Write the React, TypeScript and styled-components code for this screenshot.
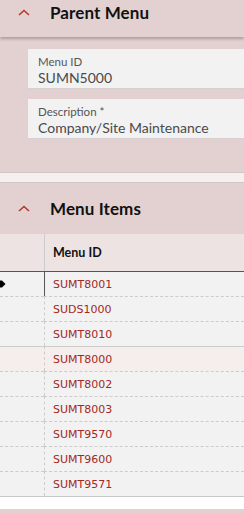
import React from 'react';
import styled, { createGlobalStyle } from 'styled-components';

const GlobalStyle = createGlobalStyle`
  html, body {
    margin: 0;
    padding: 0;
    background: #e3d1d1;
    font-family: Lato, "Noto Sans", sans-serif;
  }
`;

const menuItems = [
  'SUMT8001',
  'SUDS1000',
  'SUMT8010',
  'SUMT8000',
  'SUMT8002',
  'SUMT8003',
  'SUMT9570',
  'SUMT9600',
  'SUMT9571',
];

const Chevron = () => (
  <svg width="12" height="7" viewBox="0 0 12 7">
    <path d="M1 6 L6 1.5 L11 6" fill="none" stroke="#b2392b" strokeWidth="1.6" />
  </svg>
);

const SectionHeader = styled.div<{ $height: number; $offset?: number; $shadow?: boolean }>`
  display: flex;
  align-items: center;
  height: ${(p) => p.$height}px;
  box-sizing: border-box;
  padding-left: 18px;
  padding-bottom: ${(p) => p.$offset ?? 0}px;
  gap: 20px;
  background: #e3d1d1;
  box-shadow: ${(p) => (p.$shadow ? '0 2px 3px rgba(0, 0, 0, 0.25)' : 'none')};
  position: relative;
  z-index: 1;
`;

const Title = styled.h2`
  margin: 0;
  font-size: 17px;
  font-weight: 700;
  color: #111;
  letter-spacing: 0.1px;
`;

const FieldList = styled.div`
  display: flex;
  flex-direction: column;
  gap: 10px;
  padding: 12px 0 33px 28px;
`;

const Field = styled.div`
  height: 40px;
  box-sizing: border-box;
  padding: 5px 10px 0;
  background: #f2f2f2;
  border-bottom: 1px solid #d8d0d0;
`;

const FieldLabel = styled.div`
  font-size: 11.5px;
  color: #555;
  line-height: 15px;
`;

const FieldValue = styled.div`
  font-size: 14px;
  color: #4a4a4a;
  line-height: 17px;
`;

const Divider = styled.div`
  height: 11px;
  box-sizing: border-box;
  background: #f5f0ef;
  border-top: 1px solid #cfc6c6;
  border-bottom: 1px solid #cfc6c6;
`;

const Grid = styled.div`
  display: grid;
  grid-template-columns: 44px 1fr;
  background: #f2f2f2;
  border-bottom: 1px solid #c8c8c8;
`;

const HeadCell = styled.div<{ $first?: boolean }>`
  height: 37px;
  display: flex;
  align-items: center;
  padding-left: 8px;
  background: #ede3e3;
  border-left: ${(p) => (p.$first ? 'none' : '1px solid #cccccc')};
  font-size: 12.5px;
  font-weight: 700;
  color: #111;
`;

const Cell = styled.div<{ $first?: boolean; $selected?: boolean; $hover?: boolean }>`
  height: 25px;
  box-sizing: border-box;
  display: flex;
  align-items: center;
  padding-left: ${(p) => (p.$first ? 0 : 8)}px;
  background: ${(p) => (p.$hover ? '#f6eded' : '#f2f2f2')};
  border-top: ${(p) =>
    p.$selected ? '1px solid #555' : p.$hover ? '1px solid #cccccc' : '1px dashed #cccccc'};
  border-left: ${(p) =>
    p.$first ? 'none' : p.$selected ? '1px solid #555' : '1px dashed #cccccc'};
  font-family: "DejaVu Sans", Verdana, sans-serif;
  font-size: 11px;
  color: #a3281f;
`;

const Pointer = () => (
  <svg width="6" height="8" viewBox="0 0 6 8">
    <polygon points="0,0.5 2,0.5 5.5,4 2,7.5 0,7.5" fill="#000" />
  </svg>
);

const Footer = styled.div`
  height: 12px;
  background: #ffffff;
`;

const App = () => {
  return (
    <>
      <GlobalStyle />
      <SectionHeader $height={37} $offset={12} $shadow>
        <Chevron />
        <Title>Parent Menu</Title>
      </SectionHeader>
      <FieldList>
        <Field>
          <FieldLabel>Menu ID</FieldLabel>
          <FieldValue>SUMN5000</FieldValue>
        </Field>
        <Field>
          <FieldLabel>Description *</FieldLabel>
          <FieldValue>Company/Site Maintenance</FieldValue>
        </Field>
      </FieldList>
      <Divider />
      <SectionHeader $height={51}>
        <Chevron />
        <Title>Menu Items</Title>
      </SectionHeader>
      <Grid>
        <HeadCell $first />
        <HeadCell>Menu ID</HeadCell>
        {menuItems.map((id, i) => (
          <React.Fragment key={id}>
            <Cell $first $selected={i === 0} $hover={i === 3}>
              {i === 0 && <Pointer />}
            </Cell>
            <Cell $selected={i === 0} $hover={i === 3}>
              {id}
            </Cell>
          </React.Fragment>
        ))}
      </Grid>
      <Footer />
    </>
  );
};

export default App;
